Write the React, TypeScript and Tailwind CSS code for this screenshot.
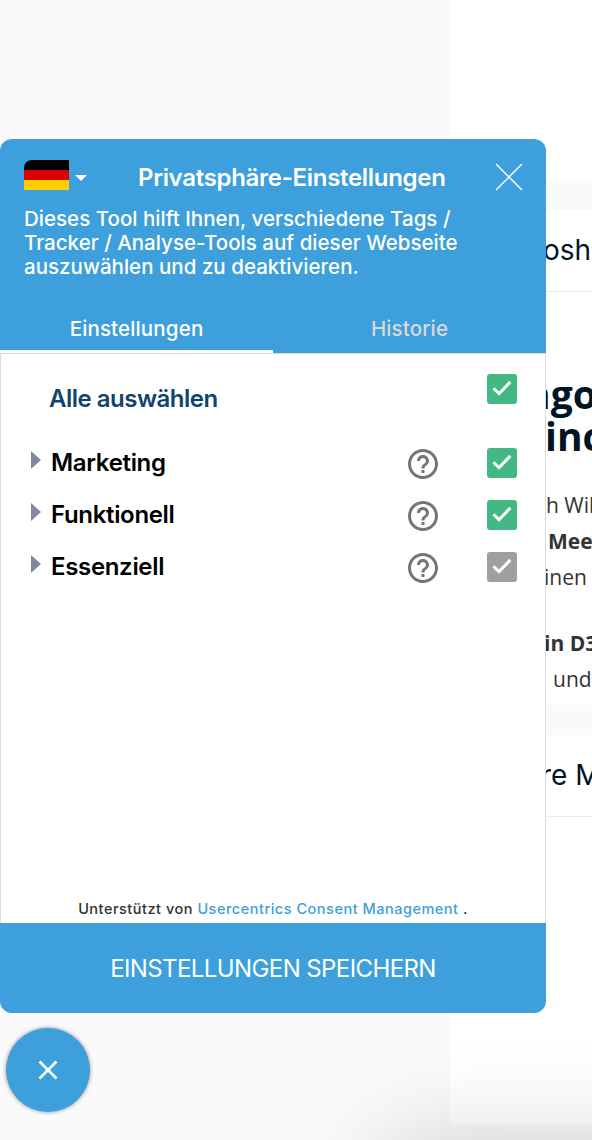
import React from 'react'

const categories = [
	{ name: 'Marketing', locked: false },
	{ name: 'Funktionell', locked: false },
	{ name: 'Essenziell', locked: true },
]

function Check({ locked = false }: { locked?: boolean }) {
	return (
		<span className={locked ? 'block size-[30px] rounded-[3px] bg-[#9f9f9f]' : 'block size-[30px] rounded-[3px] bg-[#42b983]'}>
			<svg viewBox="0 0 30 30" className="size-[30px]" fill="none" stroke="#fff" strokeWidth="3">
				<path d="M6.500 14.200 12 19.700 23.300 7.900" />
			</svg>
		</span>
	)
}

function Help() {
	return (
		<svg viewBox="2 2 20 20" className="size-[30px]" fill="#757575">
			<path d="M11 18h2v-2h-2v2zm1-16C6.480 2 2 6.480 2 12s4.480 10 10 10 10-4.480 10-10S17.520 2 12 2zm0 18c-4.410 0-8-3.590-8-8s3.590-8 8-8 8 3.590 8 8-3.590 8-8 8zm0-14c-2.210 0-4 1.790-4 4h2c0-1.100.9-2 2-2s2 .9 2 2c0 2-3 1.750-3 5h2c0-2.250 3-2.500 3-5 0-2.210-1.790-4-4-4z" />
		</svg>
	)
}

function Page() {
	return (
		<div className="ml-[450px] whitespace-nowrap">
			<div className="h-[180px] bg-white" />
			<div className="mt-[30px] h-[495px] bg-white">
				<div className="h-[82px] border-b border-[#ebebeb] pl-[93px] text-[28px] leading-[80px] text-[#001524]">osh</div>
				<div className="pt-[81px] pl-[75px] font-['Open_Sans',sans-serif] text-[39px] leading-[42px] font-bold text-[#001524]">
					<p>ngo</p>
					<p className="pl-[20px]">inc</p>
				</div>
				<div className="pt-[30px] pl-[94px] font-['Open_Sans',sans-serif] text-[21px] leading-[36px] text-[#333]">
					<p className="pl-[2px]">h Will</p>
					<p className="pl-[4px] font-bold">Meet</p>
					<p>inen</p>
					<p className="pt-[30px] font-bold">in D365</p>
					<p className="pl-[9px]">und</p>
				</div>
			</div>
			<div className="mt-[30px] h-[390px] bg-white">
				<div className="h-[82px] border-b border-[#ebebeb] pl-[91px] text-[28px] leading-[80px] text-[#001524]">re Mo</div>
			</div>
		</div>
	)
}

function App() {
	return (
		<div className="relative h-[1140px] w-[592px] overflow-hidden bg-[#fafafa] font-[Inter,sans-serif]">
			<Page />
			<div className="absolute top-[1150px] left-[390px] h-[200px] w-[600px] rounded-[40px] shadow-[0_0_100px_10px_rgba(0,0,0,0.18)]" />
			<div className="absolute top-[139px] left-0 flex h-[874px] w-[546px] flex-col overflow-hidden rounded-[12px] bg-white">
				<header className="h-[214px] bg-[#3d9fdb] text-white">
					<div className="flex h-[68px] items-start px-6 pt-[21px]">
						<svg viewBox="0 0 45 30" className="h-[30px] w-[45px]">
							<path d="M0 10V8a8 8 0 0 1 8-8h37v10z" fill="#000" />
							<path d="M0 10h45v10H0z" fill="#d00" />
							<path d="M0 20h45v10H0z" fill="#ffce00" />
						</svg>
						<svg viewBox="0 0 12 6" className="mt-[15px] ml-[6px] h-[6px] w-[12px]" fill="#fff">
							<path d="M0 0h12L6 6z" />
						</svg>
						<h1 className="flex-1 pl-[51px] text-[24px] leading-[36px] font-semibold tracking-[-0.3px] whitespace-nowrap">Privatsphäre-Einstellungen</h1>
						<svg viewBox="0 0 28 28" className="mt-[3px] mr-[-1px] size-7" stroke="#fff" strokeWidth="1.4">
							<path d="M1 1 27 27M27 1 1 27" />
						</svg>
					</div>
					<p className="px-6 text-[20.5px] leading-6 font-medium tracking-[0.02px] whitespace-nowrap">
						Dieses Tool hilft Ihnen, verschiedene Tags /<br />
						Tracker / Analyse-Tools auf dieser Webseite<br />
						auszuwählen und zu deaktivieren.
					</p>
					<nav className="mt-6 flex h-[50px] text-center text-[20.5px] leading-[52px] font-medium tracking-[0.15px]">
						<div className="w-[273px] rounded-t-[2px] border-b-[3px] border-white">Einstellungen</div>
						<div className="w-[273px] text-[#d9d9d9]">Historie</div>
					</nav>
				</header>
				<main className="flex flex-1 flex-col border border-b-0 border-[#dcdcdc]">
					<div className="flex h-[84px] items-start pt-5 pr-[28px] pl-[48px]">
						<span className="flex-1 pt-[7px] text-[24px] leading-[36px] font-semibold tracking-[-0.5px] text-[#0f4470]">Alle auswählen</span>
						<Check />
					</div>
					{categories.map((c) => (
						<div key={c.name} className="flex h-[52px] items-start pt-[10px] pr-[28px] pl-[30px]">
							<svg viewBox="0 0 10 18" className="mt-[3px] h-[18px] w-[10px]" fill="#7f8a9b">
								<path d="M0 0v18l10-9z" />
							</svg>
							<span className="flex-1 pl-[10px] text-[24px] leading-[30px] font-semibold tracking-[-0.33px] text-black">{c.name}</span>
							<span className="mt-px mr-[49px]"><Help /></span>
							<Check locked={c.locked} />
						</div>
					))}
					<p className="mt-auto pb-[3px] text-center text-[14.5px] leading-[22px] font-medium tracking-[0.51px] text-[#303030]">
						Unterstützt von <span className="text-[#3d9fdb]">Usercentrics Consent Management</span> .
					</p>
				</main>
				<button className="h-[90px] bg-[#3d9fdb] pt-[2px] text-[24px] tracking-[-0.6px] text-white">EINSTELLUNGEN SPEICHERN</button>
			</div>
			<button className="absolute top-[1028px] left-[6px] flex size-[84px] items-center justify-center rounded-full bg-[#3d9fdb] shadow-[0_0_4px_rgba(0,0,0,0.45)]">
				<svg viewBox="0 0 20 20" className="size-5" stroke="#fff" strokeWidth="2.6">
					<path d="M1.500 1.500 18.500 18.500M18.500 1.500 1.500 18.500" />
				</svg>
			</button>
		</div>
	)
}

export default App
